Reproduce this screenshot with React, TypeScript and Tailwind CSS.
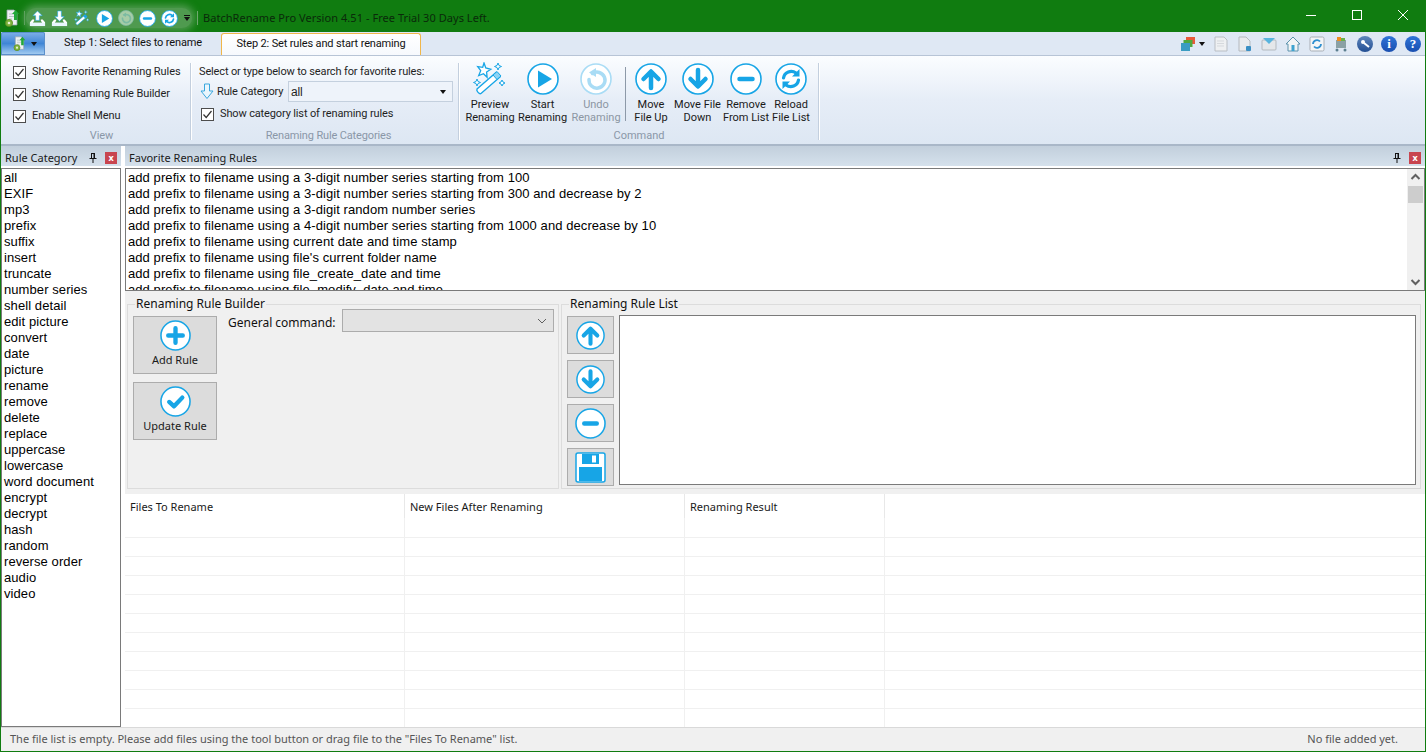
import React from 'react';

const UI = 'font-["Noto_Sans",sans-serif]';

const categories = [
  'all', 'EXIF', 'mp3', 'prefix', 'suffix', 'insert', 'truncate', 'number series', 'shell detail', 'edit picture',
  'convert', 'date', 'picture', 'rename', 'remove', 'delete', 'replace', 'uppercase', 'lowercase', 'word document',
  'encrypt', 'decrypt', 'hash', 'random', 'reverse order', 'audio', 'video',
];

const favorites = [
  'add prefix to filename using a 3-digit number series starting from 100',
  'add prefix to filename using a 3-digit number series starting from 300 and decrease by 2',
  'add prefix to filename using a 3-digit random number series',
  'add prefix to filename using a 4-digit number series starting from 1000 and decrease by 10',
  'add prefix to filename using current date and time stamp',
  "add prefix to filename using file's current folder name",
  'add prefix to filename using file_create_date and time',
  'add prefix to filename using file_modify_date and time',
];

type Glyph = 'up' | 'down' | 'minus' | 'reload' | 'play' | 'undo' | 'plus' | 'check';

// glyphs are drawn on a 32 unit box
const Glyphs = ({ g, c }: { g: Glyph; c: string }) => {
  const s = { stroke: c, strokeWidth: 4.5, fill: 'none', strokeLinecap: 'round' as const, strokeLinejoin: 'round' as const };
  switch (g) {
    case 'up':
      return <path d="M16 25V9M8.5 16 16 8.5 23.5 16" {...s} />;
    case 'down':
      return <path d="M16 7v16M8.5 16 16 23.5 23.5 16" {...s} />;
    case 'minus':
      return <path d="M9.5 16h13" {...s} />;
    case 'plus':
      return <path d="M16 8.5v15M8.5 16h15" {...s} />;
    case 'check':
      return <path d="M9.5 16.5 14.5 21 23 12" {...s} />;
    case 'play':
      return <path d="M11 7.5 25 16 11 24.5Z" fill={c} />;
    case 'undo':
      return (
        <g>
          <path d="M12.5 10.5a8 8 0 1 1-3.5 6" {...s} strokeWidth={3.5} />
          <path d="M16 5v9l-7-4.5Z" fill={c} />
        </g>
      );
    case 'reload':
      return (
        <g>
          <path d="M8.5 15a7.800 7.800 0 0 1 12.500-5" {...s} strokeWidth={3.2} />
          <path d="M23.500 17a7.800 7.800 0 0 1-12.500 5" {...s} strokeWidth={3.2} />
          <path d="M24.500 6v7.500h-7.500Z M7.500 26v-7.500H15Z" fill={c} />
        </g>
      );
  }
};

const RoundIcon = ({ g, size = 32, faded = false }: { g: Glyph; size?: number; faded?: boolean }) => {
  const c = faded ? '#a9dcf5' : '#17a5e6';
  return (
    <svg width={size} height={size} viewBox="0 0 32 32" className="shrink-0">
      <circle cx="16" cy="16" r="15" fill="#fff" stroke={c} strokeWidth="1.6" />
      <Glyphs g={g} c={c} />
    </svg>
  );
};

const Wand = ({ size = 34, small = false }: { size?: number; small?: boolean }) => (
  <svg width={size} height={size} viewBox="0 0 34 34" className="shrink-0">
    <path d="M4 27 23 10.500l4 4.500L8 31.500c-1.500 1-5-2.500-4-4.500Z" fill="#fff" stroke="#17a5e6" strokeWidth="1.400" />
    <path d="M20 13l4 4.500 4-3.500-4-4.500Z" fill={small ? '#17a5e6' : '#8fd4f5'} stroke="#17a5e6" strokeWidth="1" />
    <path d="M11 1l1.800 5 5 1.300-4.200 2.700.5 5.200-3.600-3.500-4.800 1.800 2-4.800-3-4 5 .6Z" fill="#fff" stroke="#17a5e6" strokeWidth="1.300" />
    <path d="M25 1l1 2.500 2.500 1-2.500 1-1 2.500-1-2.500-2.500-1 2.500-1Z" fill="#fff" stroke="#17a5e6" strokeWidth="1" />
    <path d="M4 17l1 2.500 2.500 1-2.500 1-1 2.500-1-2.500-2.500-1 2.500-1Z" fill="#fff" stroke="#17a5e6" strokeWidth="1" />
    <path d="M29 18l1 2 2 1-2 1-1 2-1-2-2-1 2-1Z" fill="#fff" stroke="#17a5e6" strokeWidth="1" />
  </svg>
);

const Tray = ({ up }: { up: boolean }) => (
  <svg width="17" height="17" viewBox="0 0 18 18" className="shrink-0">
    <path d="M3.500 10 1 13v4h16v-4l-2.500-3h-2v1.500L14 13.500H4L5.500 11.500V10Z" fill="#fff" />
    <rect x="1" y="13.500" width="16" height="3.500" fill="#e8f6fd" />
    <path d={up ? 'M9 1 14 6h-3v5H7V6H4Z' : 'M7 1h4v6h3l-5 5-5-5h3Z'} fill="#fff" stroke="#17a5e6" strokeWidth=".6" />
  </svg>
);

const AppIcon = ({ size = 18 }: { size?: number }) => (
  <svg width={size} height={size} viewBox="0 0 18 18" className="shrink-0">
    <path d="M4 1h7l3 3v12H4Z" fill="#eef1f4" stroke="#9aa5ad" strokeWidth=".8" />
    <path d="M6 5h5M6 7.500h5M6 10h3" stroke="#b9c2c9" strokeWidth="1" />
    <path d="M12.500 1 16 5h-2v6h-3V5H9Z" fill="#22a83a" />
    <circle cx="6" cy="14" r="3.600" fill="#7fb43c" stroke="#5b8a24" strokeWidth=".8" />
    <circle cx="6" cy="14" r="1.300" fill="#eaf3d8" />
  </svg>
);

const Check = () => (
  <span className="w-[13px] h-[13px] bg-white border border-[#4d4d4d] flex items-center justify-center shrink-0">
    <svg width="11" height="11" viewBox="0 0 11 11">
      <path d="M1.500 5.500 4.200 8.500 9.500 2" fill="none" stroke="#333" strokeWidth="1.200" />
    </svg>
  </span>
);

const CheckRow = ({ label, className = '' }: { label: string; className?: string }) => (
  <div className={`flex items-center gap-[6px] h-[22px] ${className}`}>
    <Check />
    <span className="whitespace-nowrap">{label}</span>
  </div>
);

const GroupLabel = ({ label }: { label: string }) => (
  <div className="text-center text-[#8a97a8] leading-[14px] mt-auto mb-[1px]">{label}</div>
);

const Separator = () => <div className="w-[2px] h-[77px] self-start mt-[7px] bg-[#c3cfde] border-r border-white shrink-0" />;

const Command = ({ icon, lines, faded = false, w }: { icon: React.ReactNode; lines: string[]; faded?: boolean; w: string }) => (
  <div className={`flex flex-col items-center shrink-0 ${w} ${faded ? 'text-[#8c96a3]' : 'text-[#1a1a1a]'}`}>
    <div className="h-[33px] flex items-center justify-center">{icon}</div>
    <div className="mt-[3px] text-center leading-[13px] whitespace-nowrap">
      {lines.map((l) => (
        <div key={l}>{l}</div>
      ))}
    </div>
  </div>
);

const PanelHeader = ({ title }: { title: string }) => (
  <div className="h-[20px] pt-[4px] flex items-center bg-gradient-to-b from-[#c2cfdc] to-[#d5e1ec] pl-[4px] pr-[4px] text-[#1a1a1a] shrink-0">
    <span className="flex-1 whitespace-nowrap">{title}</span>
    <svg width="8" height="10" viewBox="0 0 8 10" className="mr-[8px]">
      <path d="M2 0h4v5h1.500v1H4.500v4h-1V6H.5V5H2Zm1 1v4h1.500V1Z" fill="#111" />
    </svg>
    <span className="w-[12px] h-[12px] bg-[#c8454f] text-white font-bold text-[9px] leading-[11px] text-center">x</span>
  </div>
);

const ToolIcon = ({ children }: { children: React.ReactNode }) => (
  <svg width="16" height="16" viewBox="0 0 16 16" className="shrink-0">
    {children}
  </svg>
);

const Orb = ({ text }: { text: string }) => (
  <span className="w-[16px] h-[16px] rounded-full bg-gradient-to-b from-[#2f74d8] to-[#1a4fb0] text-white font-bold text-[13px] leading-[16px] text-center shrink-0 font-['Liberation_Serif',serif]">
    {text}
  </span>
);

const SquareBtn = ({ children }: { children: React.ReactNode }) => (
  <div className="w-[47px] h-[38px] bg-[#dcdcdc] border border-[#acacac] flex items-center justify-center">{children}</div>
);

const BigBtn = ({ g, label }: { g: Glyph; label: string }) => (
  <div className="w-[84px] h-[58px] bg-[#dcdcdc] border border-[#acacac] flex flex-col items-center pt-[3px] text-[#1a1a1a]">
    <RoundIcon g={g} size={31} />
    <span className="mt-[2px] leading-[14px]">{label}</span>
  </div>
);

const Cell = ({ w }: { w: string }) => <div className={`${w} border-r border-[#f0f0f0]`} />;

export default function App() {
  return (
    <div className={`${UI} w-[1426px] h-[752px] overflow-hidden flex flex-col bg-white text-[11px] text-black`}>
      {/* title bar */}
      <div className="h-[32px] bg-[#107c10] flex items-center shrink-0 text-[#0b2b0b]">
        <div className="mt-[4px] flex items-center">
          <div className="ml-[3px] w-[18px]"><AppIcon /></div>
          <div className="ml-[3px] w-[1px] h-[14px] bg-[#6fa86f]" />
          <div className="ml-[1px] h-[20px] flex items-center rounded-[10px] bg-[#4f9a4f] shadow-[0_0_7px_3px_#4f9a4f]">
            <div className="w-[22px] flex justify-center"><Tray up /></div>
            <div className="w-[22px] flex justify-center"><Tray up={false} /></div>
            <div className="w-[23px] flex justify-center"><Wand size={16} small /></div>
            <div className="w-[22px] flex justify-center"><RoundIcon g="play" size={17} /></div>
            <div className="w-[21px] flex justify-center opacity-50"><RoundIcon g="undo" size={16} faded /></div>
            <div className="w-[22px] flex justify-center"><RoundIcon g="minus" size={17} /></div>
            <div className="w-[22px] flex justify-center"><RoundIcon g="reload" size={17} /></div>
            <svg width="8" height="8" viewBox="0 0 8 8" className="ml-[3px] mr-[1px]">
              <path d="M1 1h6v1H1ZM1 3h6L4 7Z" fill="#111" />
            </svg>
          </div>
          <div className="ml-[5px] w-[1px] h-[14px] bg-[#6fa86f]" />
          <div className="ml-[5px] whitespace-nowrap tracking-[0.05px] text-[#0a2a0a]">BatchRename Pro Version 4.51 - Free Trial 30 Days Left.</div>
        </div>
        <div className="ml-auto -mt-[2px] flex items-center text-white">
          <div className="w-[46px] flex justify-center"><div className="w-[10px] h-[1px] bg-white" /></div>
          <div className="w-[46px] flex justify-center"><div className="w-[10px] h-[10px] border border-white" /></div>
          <div className="w-[46px] flex justify-center">
            <svg width="10" height="10" viewBox="0 0 10 10"><path d="M0 0l10 10M10 0 0 10" stroke="#fff" /></svg>
          </div>
        </div>
      </div>

      <div className="flex-1 min-h-0 flex flex-col border-x border-b border-[#107c10]">
        {/* tab strip */}
        <div className="h-[23px] bg-[#dfe8f4] flex items-end shrink-0">
          <div className="w-[44px] h-[23px] rounded-t-[2px] bg-gradient-to-b from-[#7fb0e8] via-[#3f86d6] to-[#a9d0f2] flex items-center pl-[11px] gap-[4px] shadow-[inset_0_0_0_1px_#5a8fcb]">
            <AppIcon size={15} />
            <svg width="6" height="4" viewBox="0 0 6 4"><path d="M0 0h6L3 4Z" fill="#111" /></svg>
          </div>
          <div className="w-[176px] h-[23px] flex items-center justify-center text-[#111] whitespace-nowrap font-['Roboto',sans-serif] tracking-[-0.15px]">Step 1: Select files to rename</div>
          <div className="w-[200px] h-[22px] bg-gradient-to-b from-white to-[#f6f9fd] border border-b-0 border-[#f0b64a] rounded-t-[3px] flex items-center justify-center text-[#111] whitespace-nowrap font-['Roboto',sans-serif] tracking-[-0.15px]">
            Step 2: Set rules and start renaming
          </div>
          <div className="ml-auto flex items-center h-[23px] pr-[4px] gap-[8px]">
            <div className="flex items-center gap-[3px]">
              <ToolIcon>
                <rect x="6" y="1" width="9" height="7" fill="#e8593a" />
                <rect x="3.500" y="4" width="9" height="7" fill="#4fa83f" />
                <rect x="1" y="7" width="9" height="8" fill="#3a9cc2" />
              </ToolIcon>
              <svg width="6" height="4" viewBox="0 0 6 4"><path d="M0 0h6L3 4Z" fill="#111" /></svg>
            </div>
            <ToolIcon>
              <path d="M2 1h9l3 3v11H2Z" fill="#eef0f2" stroke="#b9bec4" />
              <path d="M4 5h7M4 7.500h7M4 10h7" stroke="#d5d9dd" />
            </ToolIcon>
            <ToolIcon>
              <path d="M2 1h7l4 4v10H2Z" fill="#e9ebee" stroke="#b4b9bf" />
              <rect x="9" y="10" width="5" height="5" rx="1" fill="#3a8fc4" />
            </ToolIcon>
            <ToolIcon>
              <rect x="1" y="4" width="14" height="10" rx="1" fill="#e4e7ea" stroke="#b4b9bf" />
              <path d="M2 2h12l-6 6Z" fill="#58b4de" />
            </ToolIcon>
            <ToolIcon>
              <path d="M8 1 1 8h2v7h10V8h2Z" fill="#f2f4f5" stroke="#5c93ad" />
              <rect x="6.500" y="9" width="3" height="6" fill="#3fa3d0" />
            </ToolIcon>
            <ToolIcon>
              <rect x="1" y="1" width="14" height="14" rx="1.500" fill="#f3f5f7" stroke="#a9afb6" />
              <path d="M4 8a4 4 0 0 1 7-2.500M12 8a4 4 0 0 1-7 2.500" fill="none" stroke="#2f8fd0" strokeWidth="1.800" />
            </ToolIcon>
            <ToolIcon>
              <rect x="3" y="4" width="10" height="8" fill="#8aa0a5" />
              <rect x="4" y="1" width="4" height="4" fill="#f08c1e" />
              <rect x="8" y="2" width="4" height="3" fill="#6ab04a" />
              <circle cx="4" cy="14" r="1.500" fill="#5d7f90" />
              <circle cx="12" cy="14" r="1.500" fill="#5d7f90" />
            </ToolIcon>
            <span className="w-[16px] h-[16px] rounded-full bg-gradient-to-b from-[#5f86bd] to-[#234f93] flex items-center justify-center shrink-0">
              <svg width="12" height="12" viewBox="0 0 12 12"><circle cx="4" cy="4" r="2" fill="#fff" /><path d="M5 5l5 4" stroke="#fff" strokeWidth="2" /></svg>
            </span>
            <Orb text="i" />
            <Orb text="?" />
          </div>
        </div>

        {/* ribbon */}
        <div className="h-[91px] border-t border-[#b7c4d6] border-b-2 border-b-[#a9b7c8] bg-gradient-to-b from-[#fbfdff] via-[#e6edf7] to-[#dde7f3] flex shrink-0 text-[#1f1f1f] font-['Roboto',sans-serif]">
          <div className="w-[189px] pl-[12px] pt-[5px] flex flex-col shrink-0 tracking-[-0.08px]">
            <CheckRow label="Show Favorite Renaming Rules" />
            <CheckRow label="Show Renaming Rule Builder" />
            <CheckRow label="Enable Shell Menu" />
            <GroupLabel label="View" />
          </div>
          <Separator />
          <div className="w-[266px] pl-[7px] pt-[8px] flex flex-col shrink-0 tracking-[-0.14px]">
            <div className="leading-[16px] whitespace-nowrap">Select or type below to search for favorite rules:</div>
            <div className="flex items-center h-[21px] mt-[1px]">
              <svg width="16" height="17" viewBox="0 0 16 17" className="shrink-0">
                <path d="M5.500 1h5v7h3.500L8 15.500 2 8h3.500Z" fill="#eaf6fd" stroke="#3aa7de" />
              </svg>
              <span className="ml-[2px] w-[71px] whitespace-nowrap pt-[1px]">Rule Category</span>
              <div className="w-[165px] h-[21px] bg-[#eef3fa] border border-[#c4d0de] flex items-center pl-[2px] pr-[6px] justify-between font-['Liberation_Sans',sans-serif] text-[12px]">
                <span>all</span>
                <svg width="6" height="4" viewBox="0 0 6 4"><path d="M0 0h6L3 4Z" fill="#111" /></svg>
              </div>
            </div>
            <CheckRow label="Show category list of renaming rules" className="ml-[2px] mt-[1px]" />
            <GroupLabel label="Renaming Rule Categories" />
          </div>
          <Separator />
          <div className="w-[358px] flex flex-col shrink-0 pt-[6px]">
            <div className="flex items-start pl-[4px]">
              <Command w="w-[52px]" icon={<Wand />} lines={['Preview', 'Renaming']} />
              <Command w="w-[53px]" icon={<RoundIcon g="play" />} lines={['Start', 'Renaming']} />
              <Command w="w-[54px]" faded icon={<RoundIcon g="undo" faded />} lines={['Undo', 'Renaming']} />
              <div className="w-[1px] h-[54px] bg-[#8d99a8] ml-[2px] mr-[2px] mt-[5px] shrink-0" />
              <Command w="w-[46px]" icon={<RoundIcon g="up" />} lines={['Move', 'File Up']} />
              <Command w="w-[47px]" icon={<RoundIcon g="down" />} lines={['Move File', 'Down']} />
              <Command w="w-[50px]" icon={<RoundIcon g="minus" />} lines={['Remove', 'From List']} />
              <Command w="w-[40px]" icon={<RoundIcon g="reload" />} lines={['Reload', 'File List']} />
            </div>
            <GroupLabel label="Command" />
          </div>
          <Separator />
          <div className="flex-1" />
        </div>

        <div className="flex-1 min-h-0 flex">
          {/* category panel */}
          <div className="w-[120px] flex flex-col shrink-0">
            <PanelHeader title="Rule Category" />
            <div className="h-[2px] shrink-0" />
            <div className="flex-1 min-h-0 border border-[#7a7a7a] pl-[2px] pt-[1px] font-['Liberation_Sans',sans-serif] text-[13px] tracking-[0.08px] leading-[16px]">
              {categories.map((c) => (
                <div key={c}>{c}</div>
              ))}
            </div>
          </div>
          <div className="w-[4px] shrink-0" />

          {/* right side */}
          <div className="flex-1 min-w-0 flex flex-col">
            <PanelHeader title="Favorite Renaming Rules" />
            <div className="h-[2px] shrink-0" />
            <div className="h-[123px] border border-[#7a7a7a] flex shrink-0 overflow-hidden">
              <div className="flex-1 overflow-hidden pl-[2px] pt-[1px] font-['Liberation_Sans',sans-serif] text-[13px] tracking-[0.08px] leading-[16px] whitespace-nowrap">
                {favorites.map((f) => (
                  <div key={f}>{f}</div>
                ))}
              </div>
              <div className="w-[17px] bg-[#f0f0f0] flex flex-col items-center shrink-0">
                <svg width="17" height="17" viewBox="0 0 17 17" className="shrink-0"><path d="M4.500 10 8.500 6l4 4" fill="none" stroke="#606060" strokeWidth="2" /></svg>
                <div className="w-[15px] h-[17px] bg-[#cdcdcd]" />
                <svg width="17" height="17" viewBox="0 0 17 17" className="mt-auto shrink-0"><path d="M4.500 7 8.500 11l4-4" fill="none" stroke="#606060" strokeWidth="2" /></svg>
              </div>
            </div>

            {/* builder + rule list */}
            <div className="h-[203px] bg-[#f0f0f0] flex shrink-0 pl-[2px] pr-[4px] pt-[6px] pb-[5px] gap-[2px] text-[#1a1a1a] text-[12px]">
              <fieldset className="w-[432px] border border-[#dcdcdc] pl-[5px] pt-[5px] flex shrink-0 min-w-0">
                <legend className="ml-[2px] px-[1px] leading-[14px] text-[#111]">Renaming Rule Builder</legend>
                <div className="flex flex-col gap-[8px] text-[11px]">
                  <BigBtn g="plus" label="Add Rule" />
                  <BigBtn g="check" label="Update Rule" />
                </div>
                <div className="ml-[11px] flex items-start -mt-[7px]">
                  <span className="w-[114px] pt-[6px] leading-[16px] text-[#111] whitespace-nowrap">General command:</span>
                  <div className="w-[212px] h-[23px] bg-[#e3e3e3] border border-[#acacac] flex items-center justify-end pr-[6px]">
                    <svg width="10" height="6" viewBox="0 0 10 6"><path d="M1 1l4 4 4-4" fill="none" stroke="#606060" /></svg>
                  </div>
                </div>
              </fieldset>
              <fieldset className="flex-1 min-w-0 border border-[#dcdcdc] pl-[5px] pr-[4px] pt-[5px] flex gap-[5px]">
                <legend className="ml-[2px] px-[1px] leading-[14px] text-[#111]">Renaming Rule List</legend>
                <div className="flex flex-col gap-[6px] shrink-0">
                  <SquareBtn><RoundIcon g="up" size={29} /></SquareBtn>
                  <SquareBtn><RoundIcon g="down" size={29} /></SquareBtn>
                  <SquareBtn><RoundIcon g="minus" size={31} /></SquareBtn>
                  <SquareBtn>
                    <svg width="31" height="31" viewBox="0 0 31 31">
                      <path d="M1 3a2 2 0 0 1 2-2h25a2 2 0 0 1 2 2v25a2 2 0 0 1-2 2H3a2 2 0 0 1-2-2Z" fill="#fff" stroke="#17a5e6" strokeWidth="1.500" />
                      <rect x="7" y="2" width="17" height="10" fill="#17a5e6" />
                      <rect x="17" y="3.500" width="4" height="7" fill="#fff" />
                      <rect x="4" y="15" width="23" height="14" fill="#17a5e6" />
                    </svg>
                  </SquareBtn>
                </div>
                <div className="flex-1 h-[170px] -mt-[1px] bg-white border border-[#7a7a7a]" />
              </fieldset>
            </div>

            {/* files table */}
            <div className="flex-1 min-h-0 flex flex-col overflow-hidden text-[#1a1a1a]">
              <div className="flex h-[24px] shrink-0">
                <div className="w-[280px] pl-[5px] pt-[6px] leading-[14px] border-r border-[#e8e8e8]">Files To Rename</div>
                <div className="w-[280px] pl-[5px] pt-[6px] leading-[14px] border-r border-[#e8e8e8]">New Files After Renaming</div>
                <div className="w-[200px] pl-[5px] pt-[6px] leading-[14px] border-r border-[#e8e8e8]">Renaming Result</div>
              </div>
              <div className="h-[19px] shrink-0 flex">
                <Cell w="w-[280px]" />
                <Cell w="w-[280px]" />
                <Cell w="w-[200px]" />
              </div>
              {Array.from({ length: 10 }).map((_, i) => (
                <div key={i} className="h-[19px] shrink-0 flex border-t border-[#f0f0f0]">
                  <Cell w="w-[280px]" />
                  <Cell w="w-[280px]" />
                  <Cell w="w-[200px]" />
                </div>
              ))}
            </div>
          </div>
        </div>

        {/* status bar */}
        <div className="h-[24px] bg-[#f0f0f0] border-t border-[#d9d9d9] flex items-center justify-between pl-[9px] pr-[27px] text-[#555] shrink-0">
          <span className="whitespace-nowrap">The file list is empty. Please add files using the tool button or drag file to the "Files To Rename" list.</span>
          <span className="whitespace-nowrap">No file added yet.</span>
        </div>
      </div>
    </div>
  );
}
